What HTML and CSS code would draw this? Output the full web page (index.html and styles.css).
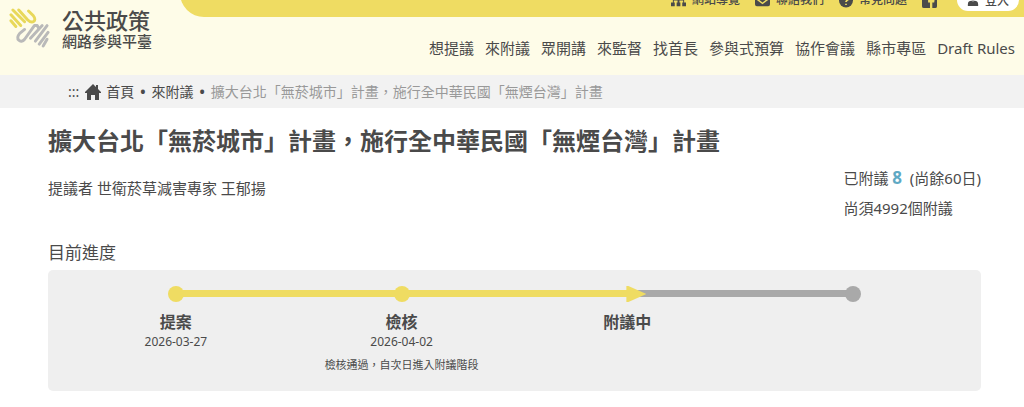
FILE: index.html
```html
<!DOCTYPE html>
<html lang="zh-Hant">
<head>
<meta charset="UTF-8" />
<meta name="viewport" content="width=device-width, initial-scale=1" />
<title>公共政策網路參與平臺</title>
<link rel="stylesheet" href="styles.css">
</head>
<body>
    <header class="site-header">
        <a class="logo" href="#">
            <svg class="logo-mark" viewBox="0 0 42 42" fill="none" stroke-width="3" stroke-linecap="round" stroke-linejoin="round" aria-hidden="true">
                <g stroke="#e8d85a">
                    <path d="M10 2 L19 12 C24 17 29 13 25 8 L20 3" />
                    <path d="M4 2 L16 14" />
                    <path d="M2 7 L12 18" />
                    <path d="M2 13 L7 19" />
                </g>
                <g stroke="#b9b9b9">
                    <path d="M16 22 L11 26 C6 32 12 37 16 32 L26 18 L29 18 L30 20" />
                    <path d="M34 18 L22 31" />
                    <path d="M39 18 L27 34" />
                    <path d="M40 25 L31 37" />
                    <path d="M39 32 L35 39" />
                </g>
            </svg>
            <span class="logo-text">
                <span class="logo-title">公共政策</span>
                <span class="logo-sub">網路參與平臺</span>
            </span>
        </a>

        <div class="header-right">
            <div class="top-bar">
                <a href="#">
                    <svg class="icon" viewBox="0 0 16 14" fill="currentColor" aria-hidden="true"><path d="M6 0h4v4H9v2h5v3h2v4h-4V9h1V7H9v2h1v4H6V9h1V7H3v2h1v4H0V9h2V6h5V4H6z" /></svg>
                    網站導覽
                </a>
                <a href="#">
                    <svg class="icon" viewBox="0 0 16 14" fill="currentColor" aria-hidden="true"><path d="M2 1h12a2 2 0 0 1 2 2L8 9 0 3a2 2 0 0 1 2-2zM0 5l8 6 8-6v6a2 2 0 0 1-2 2H2a2 2 0 0 1-2-2z" /></svg>
                    聯絡我們
                </a>
                <a href="#">
                    <svg class="icon icon-round" viewBox="0 0 14 14" aria-hidden="true"><circle cx="7" cy="7" r="7" fill="currentColor" /><path d="M5 5.200c0-3 4.300-2.700 4.300 0C9.300 7 7 6.700 7 8.500M7 10.300v1.200" fill="none" stroke="#efdc62" stroke-width="1.700" /></svg>
                    常見問題
                </a>
                <a href="#" aria-label="Facebook">
                    <svg class="icon" viewBox="0 0 16 16" fill="currentColor" aria-hidden="true"><path d="M2 0h12a2 2 0 0 1 2 2v12a2 2 0 0 1-2 2h-3v-6h2l.4-2.500H11V6.500c0-1 .5-1.500 1.500-1.500h1V3C10 2.300 8.500 3.500 8.500 6v1.500h-2V10h2v6H2a2 2 0 0 1-2-2V2a2 2 0 0 1 2-2z" /></svg>
                </a>
                <button class="login-btn" type="button">
                    <svg class="icon icon-user" viewBox="0 0 12 14" fill="currentColor" aria-hidden="true"><circle cx="6" cy="4" r="3.500" /><path d="M0 14v-2c0-3 2-4 4-4 1.500.8 2.500.8 4 0 2 0 4 1 4 4v2z" /></svg>
                    登入
                </button>
            </div>
            <nav class="main-nav">
                <a href="#">想提議</a>
                <a href="#">來附議</a>
                <a href="#">眾開講</a>
                <a href="#">來監督</a>
                <a href="#">找首長</a>
                <a href="#">參與式預算</a>
                <a href="#">協作會議</a>
                <a href="#">縣市專區</a>
                <a href="#">Draft Rules</a>
            </nav>
        </div>
    </header>

    <nav class="breadcrumb">
        <a class="anchor" href="#">:::</a>
        <a class="home" href="#">
            <svg class="icon-home" viewBox="0 0 16 16" fill="currentColor" aria-hidden="true"><path d="M8 0l3 3V1h2v4l3 3v1h-2v7h-4v-5H6v5H2V9H0V8z" /></svg>
            首頁
        </a>
        <span class="dot">•</span>
        <a href="#">來附議</a>
        <span class="dot">•</span>
        <span class="current">擴大台北「無菸城市」計畫，施行全中華民國「無煙台灣」計畫</span>
    </nav>

    <main class="content">
        <h1>擴大台北「無菸城市」計畫，施行全中華民國「無煙台灣」計畫</h1>
        <div class="meta">
            <p class="author">提議者 世衛菸草減害專家 王郁揚</p>
            <div class="count">
                <p>已附議 <strong>8</strong> &nbsp;(尚餘60日)</p>
                <p>尚須4992個附議</p>
            </div>
        </div>

        <h2>目前進度</h2>
        <ol class="progress">
            <li class="step">
                <h3>提案</h3>
                <p class="date">2026-03-27</p>
            </li>
            <li class="step">
                <h3>檢核</h3>
                <p class="date">2026-04-02</p>
                <p class="note">檢核通過，自次日進入附議階段</p>
            </li>
            <li class="step current-step">
                <h3>附議中</h3>
            </li>
            <li class="step last"></li>
        </ol>
    </main>
</body>
</html>
```
FILE: styles.css
```css
* {
    box-sizing: border-box;
}

body {
    margin: 0;
    font-family: "Noto Sans", "Noto Sans CJK TC", sans-serif;
    font-size: 15px;
    color: #4a4a4a;
    background: white;
    overflow-x: hidden;
}

a {
    color: inherit;
    text-decoration: none;
}

h1, h2, h3, p, ol {
    margin: 0;
    padding: 0;
}

/* header */
.site-header {
    display: flex;
    min-height: 75px;
    background: #fefce8;
}

.logo {
    flex: none;
    width: 180px;
    display: flex;
    align-items: flex-start;
    gap: 12px;
    padding: 8px 0 0 9px;
}

.logo-mark {
    width: 41px;
    height: 41px;
}

.logo-text {
    display: flex;
    flex-direction: column;
    white-space: nowrap;
    font-weight: 500;
}

.logo-title {
    font-size: 22px;
    line-height: 24px;
}

.logo-sub {
    font-size: 15px;
    line-height: 18px;
}

.header-right {
    flex: 1;
}

.top-bar {
    display: flex;
    justify-content: flex-end;
    align-items: center;
    gap: 15px;
    height: 34px;
    margin-top: -17px;
    padding-right: 5px;
    background: #efdc62;
    border-bottom-left-radius: 24px;
    font-size: 12px;
    font-weight: 500;
}

.top-bar a,
.login-btn {
    display: flex;
    align-items: center;
    gap: 6px;
    line-height: 18px;
}

.icon {
    width: 15px;
    height: 15px;
}

.icon-round {
    width: 14px;
}

.icon-user {
    width: 12px;
    height: 12px;
}

.login-btn {
    height: 22px;
    margin-left: 5px;
    padding: 0 10px;
    border: none;
    border-radius: 11px;
    background: white;
    color: inherit;
    font: inherit;
    cursor: pointer;
}

.main-nav {
    display: flex;
    justify-content: flex-end;
    gap: 11px;
    padding: 20px 9px 0 0;
    line-height: 22px;
    white-space: nowrap;
}

.main-nav a:hover {
    text-decoration: underline;
}

/* breadcrumb */
.breadcrumb {
    display: flex;
    align-items: center;
    gap: 6px;
    padding: 6px 0 6px 68px;
    background: #f2f2f2;
    font-size: 14px;
    line-height: 21px;
    white-space: nowrap;
}

.home {
    display: flex;
    align-items: center;
    gap: 5px;
}

.icon-home {
    width: 16px;
    height: 16px;
}

.dot {
    font-weight: 700;
}

.current {
    color: #999;
}

/* proposal */
.content {
    padding: 15px 43px 16px 48px;
}

h1 {
    font-size: 24px;
    line-height: 36px;
}

.meta {
    display: flex;
    justify-content: space-between;
    margin-top: 4px;
    line-height: 30px;
}

.author {
    padding-top: 10px;
}

.count strong {
    color: #5fa9c4;
    font-size: 17px;
}

h2 {
    margin: 18px 0 5px;
    font-size: 17px;
    font-weight: 400;
    line-height: 24px;
}

.progress {
    display: grid;
    grid-template-columns: repeat(4, 1fr);
    min-height: 121px;
    padding: 16px 15px;
    border-radius: 5px;
    background: #efefef;
    list-style: none;
    text-align: center;
}

.step {
    position: relative;
    padding-top: 25px;
}

/* line to the next step */
.step::before {
    content: "";
    position: absolute;
    top: 4px;
    left: 50%;
    width: 100%;
    height: 7px;
    background: #efdc62;
}

.current-step::before {
    background: #a9a9a9;
}

.last::before {
    display: none;
}

/* marker on the line */
.step::after {
    content: "";
    position: absolute;
    z-index: 1;
    top: 0;
    left: calc(50% - 8px);
    width: 16px;
    height: 16px;
    border-radius: 50%;
    background: #efdc62;
}

.current-step::after {
    left: calc(50% - 1px);
    width: 20px;
    border-radius: 0;
    clip-path: polygon(0 0, 10% 0, 100% 50%, 10% 100%, 0 100%);
}

.last::after {
    background: #a9a9a9;
}

h3 {
    font-size: 16px;
    line-height: 22px;
}

.date {
    font-size: 12px;
    line-height: 18px;
}

.note {
    margin-top: 5px;
    font-size: 11px;
    line-height: 18px;
}
```
